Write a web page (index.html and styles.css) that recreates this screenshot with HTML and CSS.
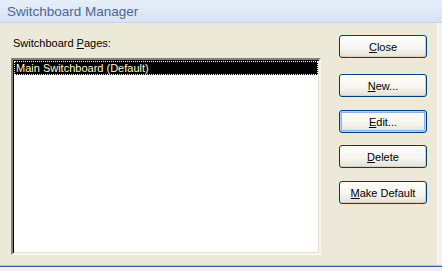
FILE: index.html
```html
<!DOCTYPE html>
<html>
<head>
<meta charset="utf-8">
<link rel="stylesheet" href="styles.css">
</head>
<body>
<div class="window">
  <div class="titlebar">Switchboard Manager</div>
  <div class="body">
    <div class="left">
      <div class="label">Switchboard <u>P</u>ages:</div>
      <div class="listbox">
        <div class="item selected"><span class="focus">Main Switchboard (Default)</span></div>
      </div>
    </div>
    <div class="buttons">
      <button class="btn b-close"><u>C</u>lose</button>
      <button class="btn b-new"><u>N</u>ew...</button>
      <button class="btn b-edit focused"><u>E</u>dit...</button>
      <button class="btn b-delete"><u>D</u>elete</button>
      <button class="btn b-default"><u>M</u>ake Default</button>
    </div>
  </div>
  <div class="bottom"></div>
</div>
</body>
</html>
```
FILE: styles.css
```css
html, body {
  margin: 0;
  padding: 0;
  background: #f2f2f2;
}
.window {
  width: 442px;
  height: 271px;
  display: flex;
  flex-direction: column;
  font-family: "Liberation Sans", Arial, sans-serif;
  font-size: 11px;
  color: #000;
}
.titlebar {
  height: 22px;
  line-height: 24px;
  padding-left: 7px;
  font-size: 13.5px;
  color: #4a6896;
  background: linear-gradient(#e6eef9, #d7e3f4);
  border-bottom: 1px solid #c3d4ec;
}
.body {
  flex: 1;
  display: flex;
  background: #ece9d8;
  border-right: 2px solid #f7f6f0;
  margin-right: 3px;
}
.left {
  padding: 14px 0 0 11px;
  width: 310px;
}
.label {
  height: 21px;
  padding-left: 2px;
  line-height: 13px;
}
.label u, .btn u { text-decoration: underline; text-underline-offset: 1px; }
.listbox {
  height: 191px;
  background: #fff;
  border-top: 2px solid #808080;
  border-left: 2px solid #808080;
  border-right: 2px solid #f6f5ee;
  border-bottom: 2px solid #f6f5ee;
  box-shadow: inset 1px 1px 0 #000, inset -1px -1px 0 #e3e0d0;
  padding: 1px;
}
.item {
  height: 14px;
  line-height: 14px;
}
.item.selected {
  background: #000;
  color: #ffffc8;
}
.focus {
  display: block;
  height: 12px;
  line-height: 12px;
  border: 1px dotted #ffffc8;
  padding-left: 1px;
}
.buttons {
  display: flex;
  flex-direction: column;
  padding: 12px 0 0 18px;
}
.btn {
  width: 88px;
  height: 23px;
  padding: 0;
  font-family: "Liberation Sans", Arial, sans-serif;
  font-size: 11px;
  color: #000;
  border: 1px solid #003c74;
  border-radius: 3px;
  background: linear-gradient(#ffffff 0%, #f5f4ee 60%, #e3e1d6 100%);
  box-shadow: inset -1px -1px 0 #d6d0c2;
}
.b-new { margin-top: 16px; }
.b-edit { margin-top: 13px; }
.b-delete { margin-top: 12px; }
.b-default { margin-top: 13px; }
.btn.focused {
  box-shadow: inset 0 0 0 1px #b9d1f8, inset 0 0 0 2px #8fb0ea;
}
.bottom {
  height: 5px;
  background: #f0f0f0;
  border-top: 1px solid #a9c4ec;
  box-shadow: inset 0 1px 0 #3b5e98;
}
```
